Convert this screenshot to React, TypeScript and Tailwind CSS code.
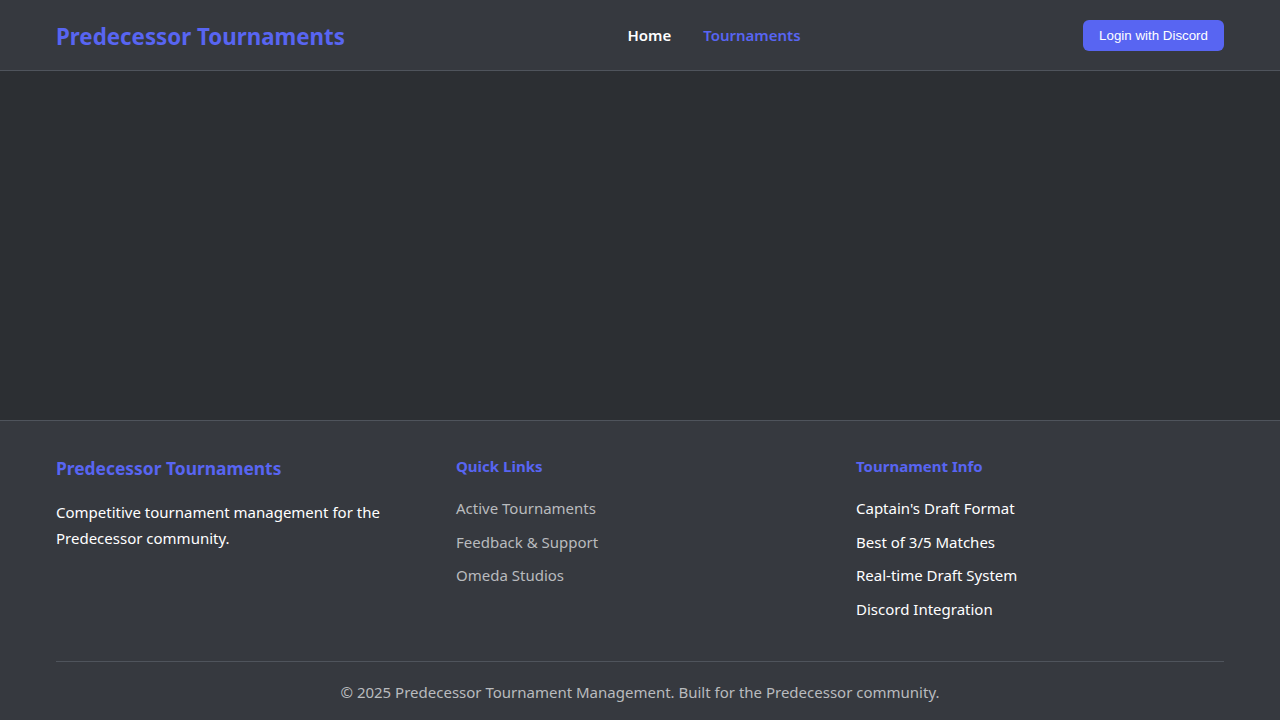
import React from "react";

export default function App() {
  return (
    <div className="min-h-screen flex flex-col bg-[#2c2f33] text-white" style={{ fontFamily: '"Noto Sans", sans-serif' }}>
      <header className="bg-[#36393f] border-b border-[#4f545c] h-[71px]">
        <div className="px-14 h-[70px] flex items-center justify-between">
          <div className="text-[22.3px] leading-8 font-bold text-[#5865f2] pt-[3px]">Predecessor Tournaments</div>
          <nav className="flex items-center gap-8 text-[15px] font-semibold">
            <a className="text-white">Home</a>
            <a className="text-[#5865f2]">Tournaments</a>
          </nav>
          <button className="bg-[#5865f2] text-white text-[13.33px] rounded-md h-[31px] pt-px px-4 mt-px" style={{ fontFamily: '"Liberation Sans", Arial, sans-serif' }}>
            Login with Discord
          </button>
        </div>
      </header>
      <main className="flex-1" />
      <footer className="bg-[#36393f] border-t border-[#4f545c]">
        <div className="px-14 pt-[33px]">
          <div className="grid grid-cols-3 gap-8">
            <div>
              <h3 className="text-[17.4px] leading-7 font-bold text-[#5865f2] mb-[17px]">Predecessor Tournaments</h3>
              <p className="text-[15px] leading-[26px] text-white">
                Competitive tournament management for the Predecessor community.
              </p>
            </div>
            <div>
              <h4 className="text-[15px] leading-6 font-bold text-[#5865f2] mb-[18px]">Quick Links</h4>
              <ul className="flex flex-col gap-[9.67px] text-[15px] leading-6 text-[#b9bbbe]">
                <li>Active Tournaments</li>
                <li>Feedback &amp; Support</li>
                <li>Omeda Studios</li>
              </ul>
            </div>
            <div>
              <h4 className="text-[15px] leading-6 font-bold text-[#5865f2] mb-[18px]">Tournament Info</h4>
              <ul className="flex flex-col gap-[9.67px] text-[15px] leading-6 text-white">
                <li>Captain's Draft Format</li>
                <li>Best of 3/5 Matches</li>
                <li>Real-time Draft System</li>
                <li>Discord Integration</li>
              </ul>
            </div>
          </div>
          <div className="mt-10 border-t border-[#4f545c] pt-[18px] pb-[16px] text-center text-[15px] leading-6 text-[#b9bbbe]">
            © 2025 Predecessor Tournament Management. Built for the Predecessor community.
          </div>
        </div>
      </footer>
    </div>
  );
}
